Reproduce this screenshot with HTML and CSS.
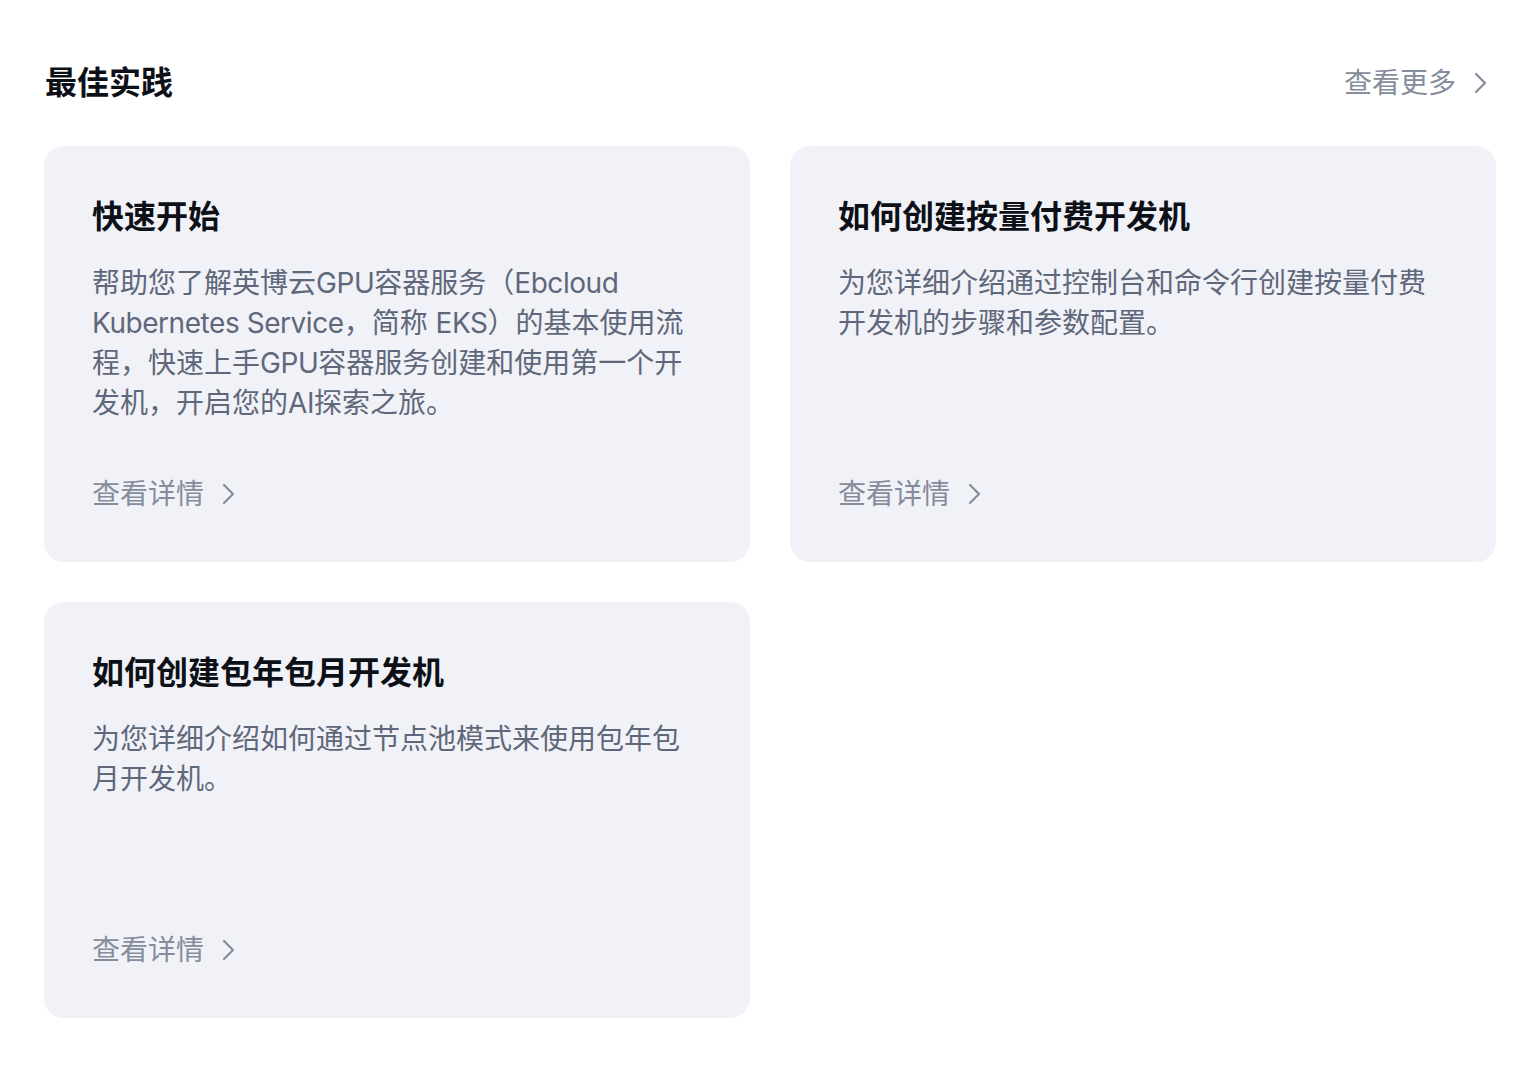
FILE: index.html
```html
<!DOCTYPE html>
<html lang="zh-CN">
<head>
<meta charset="utf-8">
<title>最佳实践</title>
<link rel="stylesheet" href="styles.css">
</head>
<body>
<section class="practice">
  <div class="practice-header">
    <h2 class="practice-title">最佳实践</h2>
    <a class="more-link" href="#">查看更多<svg class="chev" viewBox="0 0 24 24" width="24" height="24"><path d="M8 3 L17 12 L8 21" fill="none" stroke="currentColor" stroke-width="2.2" stroke-linecap="round" stroke-linejoin="round"/></svg></a>
  </div>
  <div class="card-grid">
    <div class="card">
      <h3 class="card-title">快速开始</h3>
      <p class="card-desc">帮助您了解英博云<span class="en">GPU</span>容器服务（<span class="en">Ebcloud Kubernetes Service</span>，简称 <span class="en">EKS</span>）的基本使用流程，快速上手<span class="en">GPU</span>容器服务创建和使用第一个开发机，开启您的<span class="en">AI</span>探索之旅。</p>
      <a class="card-link" href="#">查看详情<svg class="chev" viewBox="0 0 24 24" width="24" height="24"><path d="M8 3 L17 12 L8 21" fill="none" stroke="currentColor" stroke-width="2.2" stroke-linecap="round" stroke-linejoin="round"/></svg></a>
    </div>
    <div class="card">
      <h3 class="card-title">如何创建按量付费开发机</h3>
      <p class="card-desc">为您详细介绍通过控制台和命令行创建按量付费开发机的步骤和参数配置。</p>
      <a class="card-link" href="#">查看详情<svg class="chev" viewBox="0 0 24 24" width="24" height="24"><path d="M8 3 L17 12 L8 21" fill="none" stroke="currentColor" stroke-width="2.2" stroke-linecap="round" stroke-linejoin="round"/></svg></a>
    </div>
    <div class="card">
      <h3 class="card-title">如何创建包年包月开发机</h3>
      <p class="card-desc">为您详细介绍如何通过节点池模式来使用包年包月开发机。</p>
      <a class="card-link" href="#">查看详情<svg class="chev" viewBox="0 0 24 24" width="24" height="24"><path d="M8 3 L17 12 L8 21" fill="none" stroke="currentColor" stroke-width="2.2" stroke-linecap="round" stroke-linejoin="round"/></svg></a>
    </div>
  </div>
</section>
</body>
</html>
```
FILE: styles.css
```css
* { box-sizing: border-box; }
html, body {
  margin: 0;
  padding: 0;
  background: #ffffff;
}
body {
  font-family: "Inter", "Noto Sans CJK SC", sans-serif;
  color: #0d1117;
}
.practice {
  padding: 61px 30px 40px 44px;
}
.practice-header {
  display: flex;
  align-items: center;
  justify-content: space-between;
  height: 44px;
  margin-bottom: 41px;
}
.practice-title {
  margin: 0;
  font-size: 32px;
  line-height: 44px;
  font-weight: 700;
  color: #0d1117;
  padding-left: 1px;
}
.more-link {
  display: flex;
  align-items: center;
  gap: 12px;
  font-size: 28px;
  line-height: 40px;
  color: #858c9b;
  text-decoration: none;
  padding-right: 4px;
}
.chev {
  display: block;
  width: 24px;
  height: 24px;
}
.card-grid {
  display: grid;
  grid-template-columns: 706px 706px;
  column-gap: 40px;
  row-gap: 40px;
}
.card {
  background: #f1f2f7;
  border-radius: 20px;
  height: 416px;
  padding: 49px 48px 48px 48px;
  display: flex;
  flex-direction: column;
}
.card-title {
  margin: 0;
  font-size: 32px;
  line-height: 44px;
  font-weight: 700;
  color: #0d1117;
}
.card-desc {
  margin: 24px 0 0;
  font-size: 28px;
  line-height: 40px;
  color: #5f677a;
}
.en {
  letter-spacing: -0.45px;
}
.card-link {
  margin-top: auto;
  display: flex;
  align-items: center;
  gap: 12px;
  font-size: 28px;
  line-height: 40px;
  color: #858c9b;
  text-decoration: none;
}
```
